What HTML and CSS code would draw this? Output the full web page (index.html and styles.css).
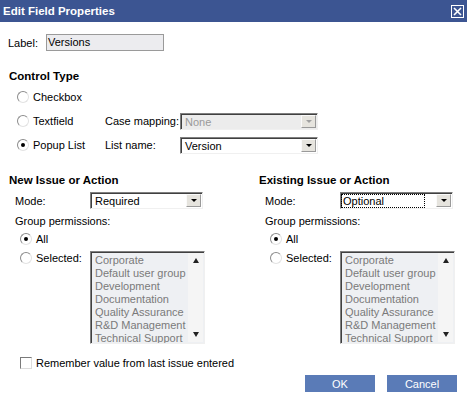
FILE: index.html
```html
<!DOCTYPE html>
<html lang="en">
<head>
    <meta charset="UTF-8">
    <title>Edit Field Properties</title>
    <link rel="stylesheet" href="styles.css">
</head>
<body>
<div class="titlebar">
    <span class="title">Edit Field Properties</span>
    <span class="close">
        <svg width="9" height="9" viewBox="0 0 9 9"><path d="M1 1L8 8M8 1L1 8" stroke="#fff" stroke-width="1.6"/></svg>
    </span>
</div>

<div class="content">
    <div class="label-row">
        <span>Label:</span>
        <span class="field">Versions</span>
    </div>

    <h3 class="heading type-heading">Control Type</h3>
    <div class="types">
        <label class="opt"><i class="radio"></i>Checkbox</label>
        <span></span>
        <span></span>

        <label class="opt"><i class="radio"></i>Textfield</label>
        <span>Case mapping:</span>
        <div class="select disabled"><span class="value">None</span><span class="arrow"></span></div>

        <label class="opt"><i class="radio on"></i>Popup List</label>
        <span>List name:</span>
        <div class="select"><span class="value">Version</span><span class="arrow"></span></div>
    </div>

    <div class="columns">
        <div class="col">
            <h3 class="heading">New Issue or Action</h3>
            <div class="mode-row">
                <span class="mode-label">Mode:</span>
                <div class="select mode"><span class="value">Required</span><span class="arrow"></span></div>
            </div>
            <div class="perm">Group permissions:</div>
            <label class="opt all"><i class="radio on"></i>All</label>
            <div class="sel-row">
                <label class="opt sel"><i class="radio"></i>Selected:</label>
                <div class="listbox">
                    <ul>
                        <li>Corporate</li>
                        <li>Default user group</li>
                        <li>Development</li>
                        <li>Documentation</li>
                        <li>Quality Assurance</li>
                        <li>R&amp;D Management</li>
                        <li>Technical Support</li>
                    </ul>
                    <div class="scroll"><span class="up"></span><span class="down"></span></div>
                </div>
            </div>
        </div>
        <div class="col">
            <h3 class="heading">Existing Issue or Action</h3>
            <div class="mode-row">
                <span class="mode-label">Mode:</span>
                <div class="select mode"><span class="value"><em class="focus">Optional</em></span><span class="arrow"></span></div>
            </div>
            <div class="perm">Group permissions:</div>
            <label class="opt all"><i class="radio on"></i>All</label>
            <div class="sel-row">
                <label class="opt sel"><i class="radio"></i>Selected:</label>
                <div class="listbox">
                    <ul>
                        <li>Corporate</li>
                        <li>Default user group</li>
                        <li>Development</li>
                        <li>Documentation</li>
                        <li>Quality Assurance</li>
                        <li>R&amp;D Management</li>
                        <li>Technical Support</li>
                    </ul>
                    <div class="scroll"><span class="up"></span><span class="down"></span></div>
                </div>
            </div>
        </div>
    </div>

    <label class="opt remember"><i class="check"></i>Remember value from last issue entered</label>

    <div class="buttons">
        <button type="button" class="btn">OK</button>
        <button type="button" class="btn">Cancel</button>
    </div>
</div>
</body>
</html>
```

FILE: styles.css
```css
* {
    padding: 0;
    margin: 0;
    box-sizing: border-box;
}

body {
    background: #fff;
    color: #000;
    font-family: "Liberation Sans", Arial, sans-serif;
    font-size: 11px;
    line-height: 14px;
}

.titlebar {
    height: 22px;
    background: #3c5592;
    color: #fff;
    display: flex;
    align-items: center;
    justify-content: space-between;
    padding: 0 3px 0 3px;
}

.title {
    font-weight: bold;
    font-size: 11.5px;
}

.close {
    width: 13px;
    height: 13px;
    border: 1px solid #fff;
    display: flex;
    align-items: center;
    justify-content: center;
}

.content {
    padding: 0 8px;
}

.label-row {
    margin-top: 12px;
    display: flex;
    align-items: center;
    gap: 8px;
    height: 17px;
}

.field {
    width: 118px;
    height: 17px;
    background: #ececef;
    border: 1px solid #9a9a9a;
    padding-left: 1px;
    line-height: 15px;
}

.heading {
    font-size: 11.5px;
    font-weight: bold;
    line-height: 14px;
}

.type-heading {
    margin-top: 18px;
    padding-left: 1px;
}

.types {
    margin: 2px 0 0 9px;
    display: grid;
    grid-template-columns: 88px 75px 138px;
    grid-auto-rows: 24px;
    align-items: center;
}

.opt {
    display: flex;
    align-items: center;
    gap: 3px;
}

.radio {
    width: 12px;
    height: 12px;
    border-radius: 50%;
    border: 1px solid;
    border-color: #8c8c8c #e2e2e2 #e2e2e2 #8c8c8c;
    background: #fff;
    position: relative;
    flex-shrink: 0;
    margin-right: 1px;
}

.radio.on::after {
    content: "";
    position: absolute;
    left: 3px;
    top: 3px;
    width: 4px;
    height: 4px;
    border-radius: 50%;
    background: #000;
}

.check {
    width: 12px;
    height: 12px;
    border: 1px solid;
    border-color: #7a7a7a #dcdcdc #dcdcdc #7a7a7a;
    background: #fff;
    margin-right: 1px;
}

.select {
    display: flex;
    height: 17px;
    border: 1px solid;
    border-color: #808080 #f0f0f0 #f0f0f0 #808080;
    box-shadow: inset 1px 1px 0 #404040;
    background: #fff;
}

.select .value {
    flex: 1;
    padding: 1px 0 0 4px;
    line-height: 14px;
}

.select.disabled {
    background: #ececec;
    color: #9a9a9a;
}

.select .arrow {
    width: 15px;
    margin: 1px 1px 1px 0;
    background: #e6e4de;
    border: 1px solid;
    border-color: #fafafa #9a9a9a #9a9a9a #fafafa;
    display: flex;
    align-items: center;
    justify-content: center;
}

.select .arrow::after {
    content: "";
    border-left: 3px solid transparent;
    border-right: 3px solid transparent;
    border-top: 3px solid #000;
}

.select.disabled .arrow::after {
    border-top-color: #a0a0a0;
}

.focus {
    font-style: normal;
    outline: 1px dotted #000;
    padding: 0 40px 0 1px;
    margin-left: -3px;
}

.columns {
    margin-top: 16px;
    display: grid;
    grid-template-columns: 250px 200px;
    padding-left: 1px;
}

.mode-row {
    margin-top: 5px;
    display: flex;
    align-items: center;
    padding-left: 6px;
}

.mode-label {
    width: 75px;
}

.select.mode {
    width: 113px;
}

.perm {
    margin-top: 5px;
    padding-left: 6px;
}

.all {
    margin-top: 4px;
    padding-left: 11px;
}

.sel-row {
    margin-top: 5px;
    display: flex;
    align-items: flex-start;
    padding-left: 11px;
}

.sel {
    width: 70px;
    height: 14px;
}

.listbox {
    width: 115px;
    height: 93px;
    display: flex;
    border: 1px solid;
    border-color: #808080 #f0f0f0 #f0f0f0 #808080;
    box-shadow: inset 1px 1px 0 #404040;
    background: #eef0f3;
    color: #7a7a7a;
}

.listbox ul {
    list-style: none;
    flex: 1;
    padding: 2px 0 0 4px;
    line-height: 13px;
    white-space: nowrap;
    overflow: hidden;
}

.scroll {
    width: 15px;
    margin: 1px 1px 1px 0;
    background: #f5f5f5;
    display: flex;
    flex-direction: column;
    justify-content: space-between;
    align-items: center;
    padding: 5px 0;
}

.scroll .up {
    border-left: 3px solid transparent;
    border-right: 3px solid transparent;
    border-bottom: 5px solid #222;
}

.scroll .down {
    border-left: 3px solid transparent;
    border-right: 3px solid transparent;
    border-top: 5px solid #222;
}

.remember {
    margin-top: 12px;
    padding-left: 12px;
}

.buttons {
    margin-top: 5px;
    display: flex;
    justify-content: flex-end;
    gap: 12px;
    padding-right: 2px;
}

.btn {
    width: 70px;
    height: 17px;
    border: none;
    background: #5a7bb7;
    color: #fff;
    font-family: "Liberation Sans", Arial, sans-serif;
    font-size: 11px;
}
```
